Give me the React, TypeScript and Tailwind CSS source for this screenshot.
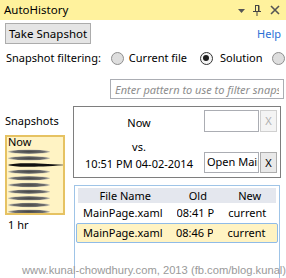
import React from 'react';

const font = { fontFamily: '"Noto Sans", "Open Sans", sans-serif' };

const Radio: React.FC<{ checked?: boolean }> = ({ checked }) => (
  <span
    className={`inline-flex items-center justify-center w-[13px] h-[13px] rounded-full border ${
      checked ? 'border-[#333] bg-[#f4f4f4]' : 'border-[#8e8e8e] bg-[#dedede]'
    }`}
  >
    {checked && <span className="w-[6px] h-[6px] rounded-full bg-[#1c1c1c]" />}
  </span>
);

const TickMarks: React.FC = () => {
  const grey = [16.7, 23.3, 36.7, 43.3, 50, 56.7, 63.3, 70, 76.7];
  return (
    <svg width="58" height="80" viewBox="0 0 58 80" className="absolute left-0 top-0">
      <defs>
        <radialGradient id="tick" cx="50%" cy="50%" r="50%">
          <stop offset="0%" stopColor="#444" />
          <stop offset="75%" stopColor="#6e6e6e" />
          <stop offset="100%" stopColor="#a8a8a8" stopOpacity="0.6" />
        </radialGradient>
      </defs>
      {grey.map(y => (
        <ellipse key={y} cx="22" cy={y - 2} rx="21" ry="2.2" fill="url(#tick)" />
      ))}
      <path d="M1,28 C8,25.4 30,26 58,28 C30,30 8,30.6 1,28 Z" fill="#111" />
    </svg>
  );
};

export default function App() {
  return (
    <div className="relative w-[286px] h-[278px] overflow-hidden bg-white text-[11px] leading-[16px] text-black" style={font}>
      {/* title bar */}
      <div className="flex items-center h-[20px] bg-[#fff29d] pl-[4px] pr-[6px]">
        <span className="flex-1 text-[11.5px]">AutoHistory</span>
        <svg width="7" height="4" viewBox="0 0 7 4" className="mr-[8px] mt-[1px]">
          <path d="M0,0 H7 L3.5,4 Z" fill="#555" />
        </svg>
        <svg width="8" height="11" viewBox="0 0 8 11" className="mr-[9px]">
          <path d="M2,0.5 H6 V6 M2.5,0.5 V6 M5.5,0.5 V6 M0,6.5 H8 M4,6.5 V11" stroke="#444" strokeWidth="1" fill="none" />
        </svg>
        <svg width="10" height="10" viewBox="0 0 10 10">
          <path d="M1,1 L9,9 M9,1 L1,9" stroke="#555" strokeWidth="1.6" />
        </svg>
      </div>

      {/* toolbar */}
      <div className="flex items-center justify-between mt-[3px] pl-[5px] pr-[5px]">
        <button className="h-[21px] w-[86px] bg-[#e5e5e5] border border-[#acacac] leading-[19px] text-[11.5px]">Take Snapshot</button>
        <span className="text-[#2a6fd6]">Help</span>
      </div>

      {/* filtering */}
      <div className="flex items-center h-[16px] mt-[6px] pl-[6px] whitespace-nowrap">
        <span>Snapshot filtering:</span>
        <span className="ml-[10px] flex"><Radio /></span>
        <span className="ml-[5px]">Current file</span>
        <span className="ml-[13px] flex"><Radio checked /></span>
        <span className="ml-[7px]">Solution</span>
        <span className="ml-[9px] flex"><Radio /></span>
      </div>

      <div className="mt-[13px] ml-[110px] w-[174px] h-[20px] border border-[#abadb3] overflow-hidden">
        <input
          readOnly
          placeholder="Enter pattern to use to filter snapshots"
          className="w-full h-full px-[4px] bg-transparent outline-none italic placeholder:text-[#8d8d8d] text-[11px]"
          style={font}
        />
      </div>

      {/* main area */}
      <div className="flex mt-[7px]">
        <div className="w-[60px] ml-[5px] pt-[7px]">
          <div>Snapshots</div>
          <div className="relative mt-[6px] h-[80px] border-2 border-[#e6c262] bg-[#fff3c4] overflow-hidden">
            <TickMarks />
            <div className="absolute left-[1px] top-[-2px] leading-[14px]">Now</div>
          </div>
          <div className="mt-[2px] pl-[3px]">1 hr</div>
        </div>

        <div className="ml-[8px] w-[208px]">
          <div className="flex h-[72px] border border-[#7e7e7e] pr-[3px]">
            <div className="flex-1 flex flex-col items-center pt-[8px]">
              <div>Now</div>
              <div className="mt-[8px]">vs.</div>
              <div className="mt-[1px]">10:51 PM 04-02-2014</div>
            </div>
            <div className="flex flex-col pt-[3px]">
              <div className="flex h-[22px]">
                <div className="w-[55px] border border-[#abadb3] bg-white" />
                <div className="ml-[1px] w-[17px] flex items-center justify-center border border-[#d0d0d0] bg-[#f4f4f4] text-[#b0b0b0]">X</div>
              </div>
              <div className="flex h-[21px] mt-[20px]">
                <div className="w-[55px] border border-[#abadb3] bg-white overflow-hidden whitespace-nowrap pl-[2px] leading-[17px]">Open MainPage.xaml</div>
                <div className="ml-[1px] w-[17px] flex items-center justify-center border border-[#adadad] bg-[#e9e9e9]">X</div>
              </div>
            </div>
          </div>

          <div className="mt-[7px] ml-[1px] w-[206px] h-[120px] border border-[#9fc4e7] pt-[2px] px-[3px]">
            <div className="flex h-[15px] bg-[#e4e7ee] leading-[15px]">
              <div className="w-[95px] text-center">File Name</div>
              <div className="w-[51px] text-center">Old</div>
              <div className="w-[53px] text-center">New</div>
            </div>
            <div className="flex h-[20px] items-center">
              <div className="w-[95px] pl-[5px]">MainPage.xaml</div>
              <div className="w-[51px] pl-[4px]"><div className="w-[37px] overflow-hidden whitespace-nowrap">08:41 PM</div></div>
              <div className="w-[53px] pl-[5px]">current</div>
            </div>
            <div className="flex h-[20px] items-center -mx-[2px] px-[2px] rounded-[2px] border border-[#8fbbe8] bg-[#fff3c2]">
              <div className="w-[94px] pl-[4px]">MainPage.xaml</div>
              <div className="w-[51px] pl-[4px]"><div className="w-[37px] overflow-hidden whitespace-nowrap">08:46 PM</div></div>
              <div className="w-[53px] pl-[5px]">current</div>
            </div>
          </div>
        </div>
      </div>

      <div
        className="absolute left-[22px] top-[263px] text-[11.2px] leading-[14px] text-[#9a9a9a] whitespace-nowrap"
        style={{ fontFamily: '"Liberation Sans", Arial, sans-serif' }}
      >
        www.kunal-chowdhury.com, 2013 (fb.com/blog.kunal)
      </div>
    </div>
  );
}
